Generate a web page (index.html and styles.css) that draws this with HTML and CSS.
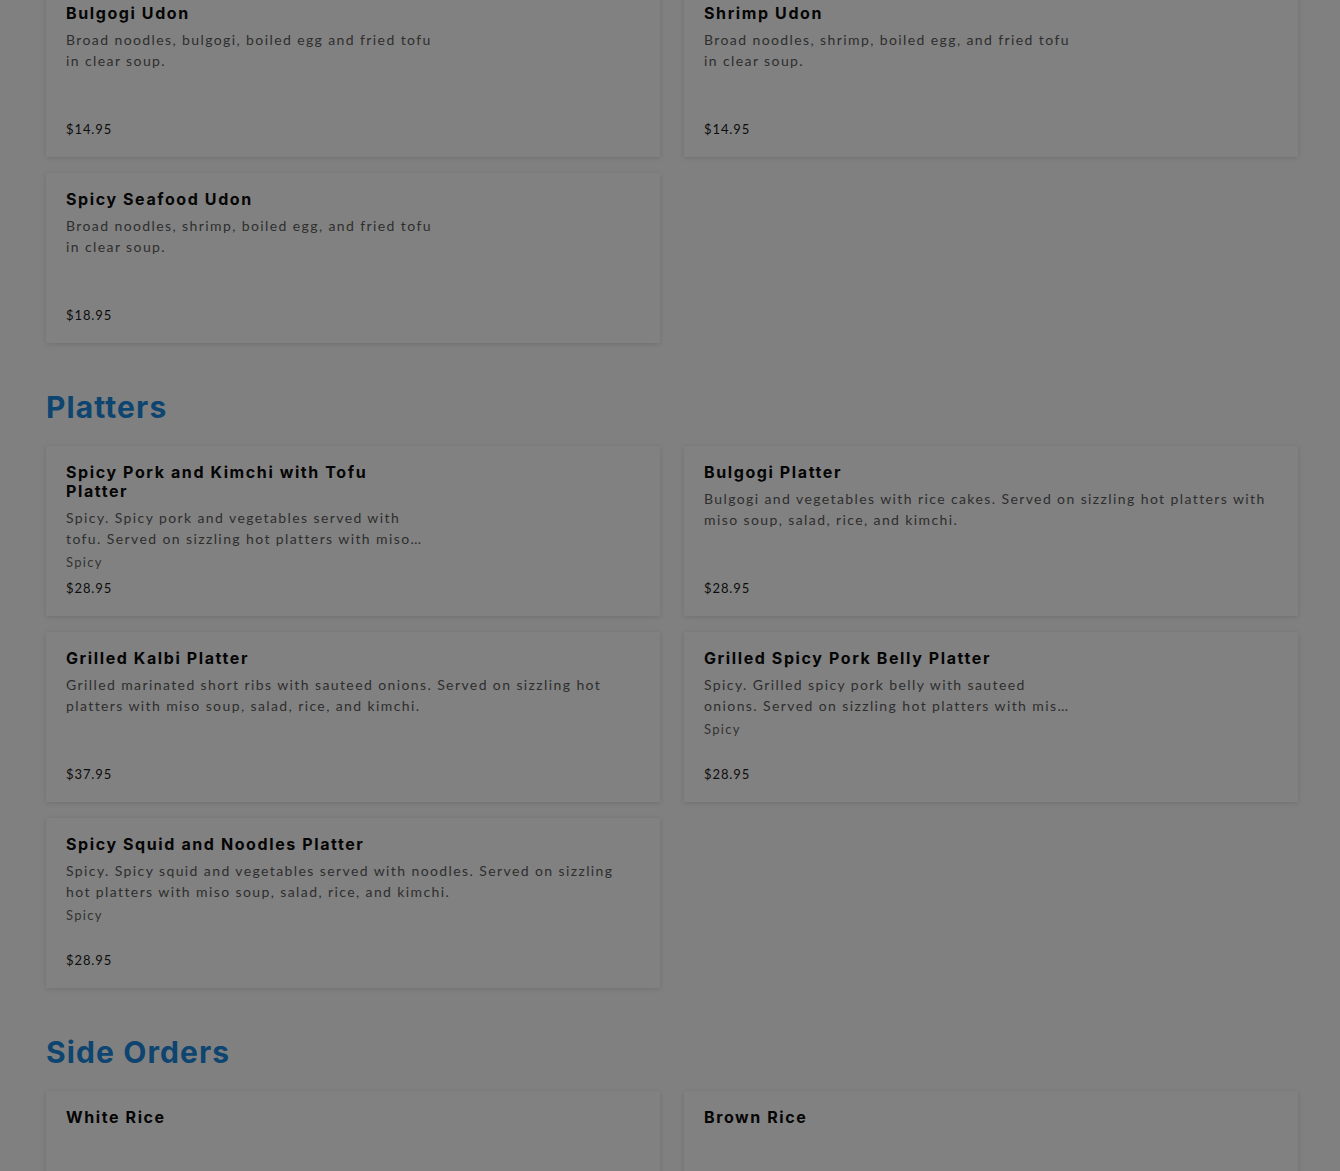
FILE: index.html
```html
<!DOCTYPE html>
<html lang="en">
<head>
<meta charset="utf-8">
<title>Menu</title>
<link rel="stylesheet" href="styles.css">
</head>
<body>
<main class="menu">
  <section class="section">
    <div class="grid">
      <article class="card narrow">
        <h3 class="title">Bulgogi Udon</h3>
        <p class="desc">Broad noodles, bulgogi, boiled egg and fried tofu in clear soup.</p>
        <p class="price">$14.95</p>
      </article>
      <article class="card narrow">
        <h3 class="title">Shrimp Udon</h3>
        <p class="desc">Broad noodles, shrimp, boiled egg, and fried tofu in clear soup.</p>
        <p class="price">$14.95</p>
      </article>
      <article class="card narrow">
        <h3 class="title">Spicy Seafood Udon</h3>
        <p class="desc">Broad noodles, shrimp, boiled egg, and fried tofu in clear soup.</p>
        <p class="price">$18.95</p>
      </article>
    </div>
  </section>

  <section class="section">
    <h2 class="heading">Platters</h2>
    <div class="grid">
      <article class="card narrow">
        <h3 class="title">Spicy Pork and Kimchi with Tofu Platter</h3>
        <p class="desc">Spicy. Spicy pork and vegetables served with tofu. Served on sizzling hot platters with miso soup, salad, rice, and kimchi.</p>
        <p class="tag">Spicy</p>
        <p class="price">$28.95</p>
      </article>
      <article class="card">
        <h3 class="title">Bulgogi Platter</h3>
        <p class="desc">Bulgogi and vegetables with rice cakes. Served on sizzling hot platters with miso soup, salad, rice, and kimchi.</p>
        <p class="price">$28.95</p>
      </article>
      <article class="card">
        <h3 class="title">Grilled Kalbi Platter</h3>
        <p class="desc">Grilled marinated short ribs with sauteed onions. Served on sizzling hot platters with miso soup, salad, rice, and kimchi.</p>
        <p class="price">$37.95</p>
      </article>
      <article class="card narrow">
        <h3 class="title">Grilled Spicy Pork Belly Platter</h3>
        <p class="desc">Spicy. Grilled spicy pork belly with sauteed onions. Served on sizzling hot platters with miso soup, salad, rice, and kimchi.</p>
        <p class="tag">Spicy</p>
        <p class="price">$28.95</p>
      </article>
      <article class="card">
        <h3 class="title">Spicy Squid and Noodles Platter</h3>
        <p class="desc">Spicy. Spicy squid and vegetables served with noodles. Served on sizzling hot platters with miso soup, salad, rice, and kimchi.</p>
        <p class="tag">Spicy</p>
        <p class="price">$28.95</p>
      </article>
    </div>
  </section>

  <section class="section">
    <h2 class="heading">Side Orders</h2>
    <div class="grid">
      <article class="card">
        <h3 class="title">White Rice</h3>
      </article>
      <article class="card">
        <h3 class="title">Brown Rice</h3>
      </article>
    </div>
  </section>
</main>
</body>
</html>
```

FILE: styles.css
```css
html, body {
  margin: 0;
  padding: 0;
  background: #808080;
}

body {
  font-family: "Lato", "Open Sans", sans-serif;
  color: #050505;
  overflow: hidden;
}

.menu {
  width: 1252px;
  margin: -13px 0 0 46px;
}

.section {
  display: flex;
  flex-direction: column;
}

.heading {
  margin: 46px 0 21px;
  font-family: "Inter", "Noto Sans", sans-serif;
  font-weight: 700;
  font-size: 30px;
  line-height: 36px;
  letter-spacing: 1.1px;
  color: #0d4570;
}

.grid {
  display: grid;
  grid-template-columns: 1fr 1fr;
  column-gap: 24px;
  row-gap: 16px;
}

.card {
  box-sizing: border-box;
  min-height: 170px;
  padding: 17px 20px 19px;
  background: #818181;
  box-shadow: 0 1px 5px rgba(0, 0, 0, 0.13);
  display: flex;
  flex-direction: column;
  align-items: flex-start;
}

.card p, .card h3 {
  margin: 0;
}

.narrow .title {
  max-width: 350px;
}

.narrow .desc {
  max-width: 370px;
}

.title {
  font-family: "Inter", "Noto Sans", sans-serif;
  font-weight: 700;
  font-size: 16px;
  line-height: 19px;
  letter-spacing: 1.6px;
  color: #050505;
}

.desc {
  margin-top: 6px !important;
  font-size: 14px;
  line-height: 21px;
  letter-spacing: 1.4px;
  color: #2e2e2e;
  display: -webkit-box;
  -webkit-box-orient: vertical;
  -webkit-line-clamp: 2;
  overflow: hidden;
}

.tag {
  margin-top: 5px !important;
  font-size: 13px;
  line-height: 16px;
  letter-spacing: 1.3px;
  color: #333333;
}

.price {
  margin-top: auto !important;
  padding-top: 8px;
  font-size: 13px;
  line-height: 18px;
  letter-spacing: 0.9px;
  color: #0d0d0d;
}
```
